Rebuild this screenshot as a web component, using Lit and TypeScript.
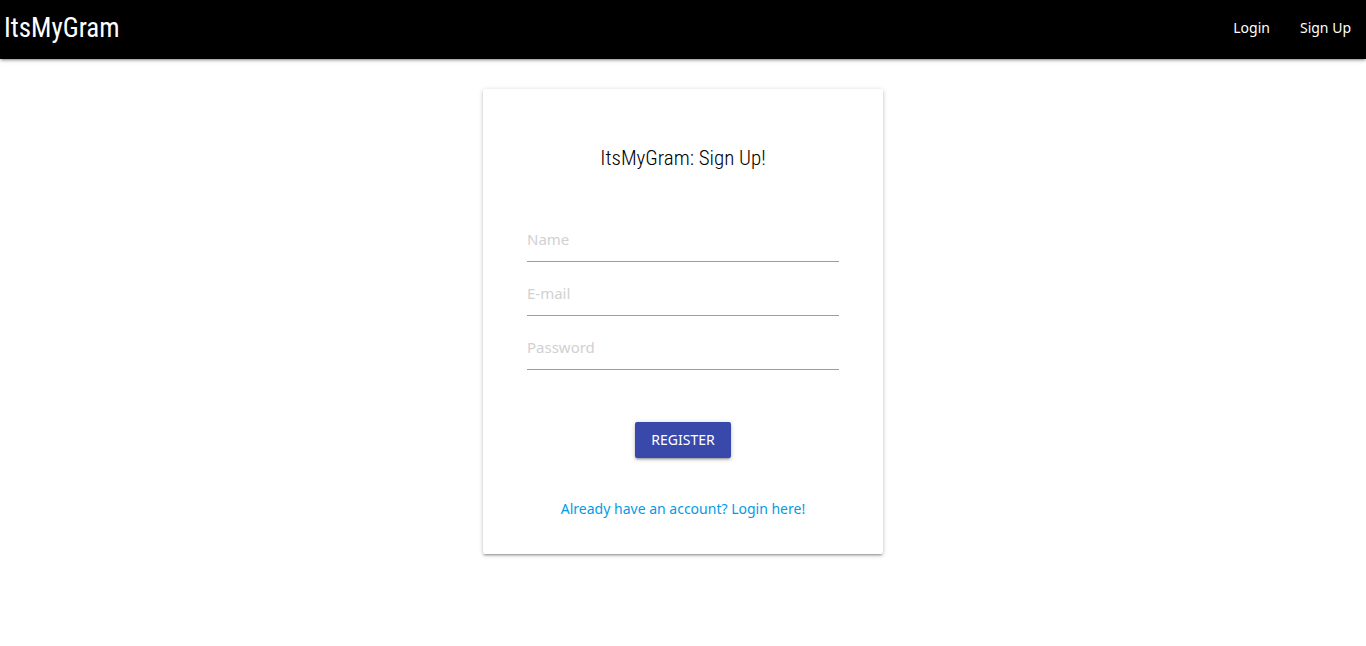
import { LitElement, html, css } from "lit";
import { customElement } from "lit/decorators.js";

@customElement("app-root")
export class AppRoot extends LitElement {
  static styles = css`
    :host {
      display: block;
      min-height: 100vh;
      background: #fff;
      color: rgba(0, 0, 0, 0.87);
      font: 14px/24px "Segoe UI", "Noto Sans", sans-serif;
    }
    * {
      box-sizing: border-box;
    }
    a {
      text-decoration: none;
    }
    .nav {
      display: flex;
      justify-content: space-between;
      align-items: center;
      height: 59px;
      padding: 0 0 3px 4px;
      background: #000;
    }
    .nav,
    .card,
    .submit {
      box-shadow: 0 2px 2px 0 rgba(0, 0, 0, 0.14),
        0 3px 1px -2px rgba(0, 0, 0, 0.12), 0 1px 5px 0 rgba(0, 0, 0, 0.2);
    }
    .brand,
    .title {
      font-family: "Roboto Condensed", "Arial Narrow", sans-serif;
    }
    .brand {
      font-size: 27px;
      font-weight: 400;
      line-height: 56px;
      color: #fff;
    }
    .links {
      display: flex;
      margin: 0;
      padding: 0;
      list-style: none;
    }
    .links a {
      display: block;
      padding: 0 15px;
      color: #fff;
    }
    .card {
      width: 400px;
      max-width: 100%;
      margin: 30px auto;
      padding: 54px 44px 33px;
      border-radius: 2px;
      background: #fff;
      text-align: center;
    }
    .title {
      margin: 0 0 43px;
      font-size: 21px;
      font-weight: 300;
      line-height: 30px;
      color: #000;
    }
    .form {
      display: flex;
      flex-direction: column;
      gap: 8px;
    }
    .field {
      width: 100%;
      height: 46px;
      padding: 0;
      border: 0;
      border-bottom: 1px solid #9e9e9e;
      border-radius: 0;
      outline: none;
      background: transparent;
      font: inherit;
      font-size: 15px;
    }
    .field:focus {
      border-bottom-color: #3949ab;
    }
    .field::placeholder {
      color: #d1d1d1;
      opacity: 1;
    }
    .submit {
      align-self: center;
      height: 36px;
      margin-top: 44px;
      padding: 0 16px;
      border: 0;
      border-radius: 2px;
      background: #3949ab;
      color: #fff;
      font: inherit;
      text-transform: uppercase;
      cursor: pointer;
    }
    .switch {
      margin: 39px 0 0;
    }
    .switch a {
      color: #039be5;
    }
  `;

  render() {
    return html`
      <nav class="nav">
        <a class="brand" href="#">ItsMyGram</a>
        <ul class="links">
          <li><a href="#login">Login</a></li>
          <li><a href="#signup">Sign Up</a></li>
        </ul>
      </nav>
      <main class="card">
        <h1 class="title">ItsMyGram: Sign Up!</h1>
        <form class="form">
          <input class="field" type="text" name="name" placeholder="Name" aria-label="Name" />
          <input class="field" type="email" name="email" placeholder="E-mail" aria-label="E-mail" />
          <input class="field" type="password" name="password" placeholder="Password" aria-label="Password" />
          <button class="submit" type="submit">Register</button>
        </form>
        <p class="switch"><a href="#login">Already have an account? Login here!</a></p>
      </main>
    `;
  }
}
